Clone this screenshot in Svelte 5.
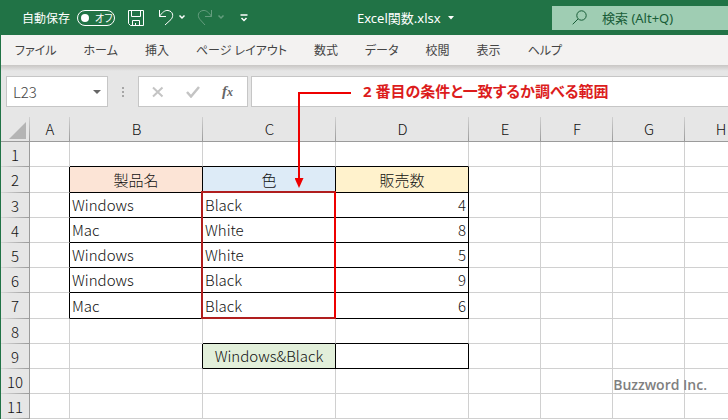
<script lang="ts">
	type Cell = { text: string; kind?: string };

	const menus = ['ファイル', 'ホーム', '挿入', 'ページ レイアウト', '数式', 'データ', '校閲', '表示', 'ヘルプ'];
	const columns = ['A', 'B', 'C', 'D', 'E', 'F', 'G', 'H'];
	const rows = [1, 2, 3, 4, 5, 6, 7, 8, 9, 10, 11];
	const tallRows = [2, 7];

	const cells: Record<string, Cell> = {
		B2: { text: '製品名', kind: 'head peach' },
		C2: { text: '色', kind: 'head blue' },
		D2: { text: '販売数', kind: 'head yellow' },
		B3: { text: 'Windows' },
		C3: { text: 'Black' },
		D3: { text: '4', kind: 'number' },
		B4: { text: 'Mac' },
		C4: { text: 'White' },
		D4: { text: '8', kind: 'number' },
		B5: { text: 'Windows' },
		C5: { text: 'White' },
		D5: { text: '5', kind: 'number' },
		B6: { text: 'Windows' },
		C6: { text: 'Black' },
		D6: { text: '9', kind: 'number' },
		B7: { text: 'Mac' },
		C7: { text: 'Black' },
		D7: { text: '6', kind: 'number' },
		C9: { text: 'Windows&Black', kind: 'head green' },
		D9: { text: '' }
	};

	let autoSave = false;
	let search = '';
	let nameBox = 'L23';
	let formula = '';

	// a cell draws its own right and bottom line, so the neighbours decide the colour too
	function cellClass(col: number, row: number) {
		const here = cells[columns[col] + row];
		const right = cells[columns[col + 1] + row];
		const below = cells[columns[col] + (row + 1)];
		return [
			here?.kind ?? '',
			here || right ? 'line-right' : '',
			here || below ? 'line-bottom' : ''
		].join(' ');
	}
</script>

<div class="app">
	<header class="titlebar">
		<label class="autosave">
			自動保存
			<span class="switch">
				<input type="checkbox" bind:checked={autoSave} />
				<span class="state">{autoSave ? 'オン' : 'オフ'}</span>
			</span>
		</label>
		<div class="quick">
			<button aria-label="上書き保存">
				<svg width="16" height="16" viewBox="0 0 16 16">
					<path d="M.5 .5h15v15H2.5l-2-2zM3.5 .5v6h9v-6M4.5 15.5v-5h7v5M7.5 15v-2" />
				</svg>
			</button>
			<button class="undo" aria-label="元に戻す">
				<svg width="28" height="17" viewBox="0 0 28 17">
					<path d="M1.5 1v6.5H8M1.5 7.5C4 3.5 7 1 10 1.5c5 .8 6 5.5 3 9L7 16" />
					<path class="bold" d="M21.5 6.5l2.5 2.5 2.5-2.5" />
				</svg>
			</button>
			<button class="redo" aria-label="やり直し" disabled>
				<svg width="28" height="17" viewBox="0 0 28 17">
					<path d="M14.5 1v6.5H8M14.5 7.5C12 3.5 9 1 6 1.500c-5 .8-6 5.5-3 9L8 16" />
					<path class="bold" d="M21.5 6.5l2.5 2.5 2.5-2.5" />
				</svg>
			</button>
			<button class="customize" aria-label="クイック アクセス ツール バーのカスタマイズ">
				<svg width="8" height="8" viewBox="0 0 8 8">
					<path class="bold" d="M.5 1h7M1.5 4l2.5 2.5L6.5 4" />
				</svg>
			</button>
		</div>
		<button class="filename">
			Excel関数.xlsx
			<svg width="6" height="4" viewBox="0 0 6 4"><path class="solid" d="M0 0h6L3 3.5z" /></svg>
		</button>
		<label class="search">
			<svg width="15" height="15" viewBox="0 0 15 15">
				<circle cx="9.5" cy="5.5" r="4.7" />
				<path d="M6 9L.7 14.3" />
			</svg>
			<input type="text" placeholder="検索 (Alt+Q)" aria-label="検索" bind:value={search} />
		</label>
	</header>

	<div class="window">
		<nav class="menubar">
			{#each menus as menu}
				<button>{menu}</button>
			{/each}
		</nav>

		<div class="formula-bar">
			<div class="box name-box">
				<input type="text" aria-label="名前ボックス" bind:value={nameBox} />
				<button aria-label="名前の一覧">
					<svg width="8" height="4" viewBox="0 0 8 4"><path d="M0 0h8L4 4z" fill="#666" /></svg>
				</button>
			</div>
			<svg class="grip" width="3" height="10" viewBox="0 0 3 10">
				<path d="M0 0h2v2H0zM0 4h2v2H0zM0 8h2v2H0z" fill="#a6a6a6" />
			</svg>
			<div class="box tools">
				<button aria-label="キャンセル">
					<svg width="12" height="12" viewBox="0 0 12 12">
						<path d="M1 1.5l9.5 9M10.5 1.5L1 10.5" stroke="#c4c4c4" stroke-width="2" />
					</svg>
				</button>
				<button aria-label="入力">
					<svg width="14" height="12" viewBox="0 0 14 12">
						<path d="M1 6l4 4.5L13 1" fill="none" stroke="#c4c4c4" stroke-width="2.5" />
					</svg>
				</button>
				<button class="fx" aria-label="関数の挿入"><i>f<small>x</small></i></button>
			</div>
			<input class="box formula" type="text" aria-label="数式バー" bind:value={formula} />
		</div>

		<div class="sheet">
			<table>
				<colgroup>
					<col class="w-head" />
					<col class="w-a" />
					<col class="w-wide" span="3" />
					<col class="w-base" span="4" />
				</colgroup>
				<thead>
					<tr>
						<th class="corner">
							<svg width="18" height="17" viewBox="0 0 18 17"><path d="M17 0v17H0z" fill="#b4b4b4" /></svg>
						</th>
						{#each columns as column}
							<th scope="col">{column}</th>
						{/each}
					</tr>
				</thead>
				<tbody>
					{#each rows as row}
						<tr class:tall={tallRows.includes(row)}>
							<th scope="row">{row}</th>
							{#each columns as column, i}
								<td class={cellClass(i, row)}>{cells[column + row]?.text ?? ''}</td>
							{/each}
						</tr>
					{/each}
				</tbody>
			</table>
			<div class="range"></div>
		</div>
	</div>

	<svg class="arrow" width="58" height="98" viewBox="0 0 58 98">
		<path d="M56 2H4v86" fill="none" stroke="#ee0000" stroke-width="2" />
		<path d="M-.5 87h9L4 97z" fill="#ee0000" />
	</svg>
	<p class="note">2 番目の条件と一致するか調べる範囲</p>
	<p class="credit">Buzzword Inc.</p>
</div>

<style>
	:global(body) {
		margin: 0;
		background: #fff;
	}
	.app {
		position: relative;
		min-height: 100vh;
		overflow: hidden;
		font-family: 'Noto Sans', 'Noto Sans CJK JP', sans-serif;
		font-size: 13px;
		font-feature-settings: 'palt';
	}
	button,
	input {
		font: inherit;
		font-feature-settings: inherit;
		color: inherit;
		background: none;
		border: 0;
		margin: 0;
		padding: 0;
		box-sizing: border-box;
	}
	input:focus {
		outline: none;
	}
	svg {
		display: block;
		flex: none;
	}

	.titlebar {
		display: flex;
		align-items: center;
		height: 35px;
		padding-left: 22px;
		background: #217346;
		color: #fff;
	}
	.titlebar svg {
		fill: none;
		stroke: currentColor;
	}
	.titlebar .bold {
		stroke-width: 1.5;
	}
	.titlebar .solid {
		fill: currentColor;
		stroke: none;
	}
	.autosave {
		display: flex;
		align-items: center;
		gap: 7px;
		flex: none;
		width: 106px;
		font-family: 'Noto Sans CJK JP', sans-serif;
		font-size: 12px;
		white-space: nowrap;
	}
	.switch {
		display: flex;
		align-items: center;
		gap: 6px;
		box-sizing: border-box;
		width: 38px;
		height: 16px;
		padding-left: 3px;
		border: 1px solid #fff;
		border-radius: 8px;
		font-size: 10px;
	}
	.switch input {
		appearance: none;
		width: 8px;
		height: 8px;
		border-radius: 50%;
		background: #fff;
	}
	.quick {
		display: flex;
		align-items: center;
		flex: none;
		width: 229px;
	}
	.undo {
		margin-left: 14px;
	}
	.redo {
		margin-left: 11px;
		opacity: 0.3;
	}
	.customize {
		margin-left: 15px;
	}
	.filename {
		display: flex;
		align-items: center;
		gap: 7px;
		flex: none;
		width: 195px;
		white-space: nowrap;
	}
	.search {
		display: flex;
		align-items: center;
		gap: 15px;
		flex: 1;
		height: 24px;
		padding-left: 20px;
		background: #9fcdb3;
		color: #185c37;
	}
	.search input {
		flex: 1;
		min-width: 0;
	}
	.search input::placeholder {
		color: #185c37;
		opacity: 1;
	}

	.window {
		border-left: 1px solid #217346;
	}
	.menubar {
		display: flex;
		gap: 1px;
		height: 30px;
		padding-left: 1px;
		background: #f3f2f1;
		color: #444;
		font-size: 12px;
	}
	.menubar button {
		padding: 0 13px;
		white-space: nowrap;
	}
	.formula-bar {
		display: flex;
		align-items: center;
		padding: 11px 0 10px;
		background: linear-gradient(#c8c6c4, #e6e6e6 6px);
	}
	.box {
		box-sizing: border-box;
		height: 31px;
		border: 1px solid #c6c6c6;
		background: #fff;
	}
	.name-box {
		display: flex;
		align-items: center;
		width: 102px;
		margin-left: 5px;
		padding: 0 6px;
		color: #444;
		font-size: 15px;
		font-weight: 300;
		font-family: 'Noto Sans CJK JP', sans-serif;
	}
	.name-box input {
		flex: 1;
		min-width: 0;
	}
	.grip {
		margin: 0 13px 0 14px;
	}
	.tools {
		display: flex;
		align-items: center;
		gap: 22px;
		width: 110px;
		padding-left: 13px;
	}
	.fx {
		color: #666;
		font-family: 'Liberation Serif', serif;
		font-size: 15px;
		font-weight: bold;
		line-height: 16px;
	}
	.fx small {
		font-size: 12px;
	}
	.formula {
		flex: 1;
		min-width: 0;
		margin-left: 3px;
		border-right: 0;
	}

	.sheet {
		position: relative;
		overflow: hidden;
		background: #fff;
		font-family: 'Noto Sans CJK JP', sans-serif;
		font-size: 15px;
		font-weight: 300;
		line-height: 20px;
		color: #111;
	}
	table {
		width: 756px;
		table-layout: fixed;
		border-collapse: separate;
		border-spacing: 0;
	}
	.w-head {
		width: 29px;
	}
	.w-a {
		width: 40px;
	}
	.w-wide {
		width: 133px;
	}
	.w-base {
		width: 72px;
	}
	tr {
		height: 25px;
	}
	.tall {
		height: 26px;
	}
	th,
	td {
		box-sizing: border-box;
		padding: 0;
		white-space: nowrap;
	}
	th {
		background: #e6e6e6;
		font-weight: inherit;
	}
	thead th {
		border-bottom: 1px solid #9b9b9b;
		background: linear-gradient(#d0d0d0, #9b9b9b) right / 1px 100% no-repeat #e6e6e6;
	}
	.corner svg {
		margin: 3px 0 0 8px;
	}
	tbody th {
		border-right: 1px solid #9b9b9b;
		background: linear-gradient(90deg, #d8d8d8, #9b9b9b) bottom / 100% 1px no-repeat #e6e6e6;
	}
	td {
		padding: 0 2px;
		border-right: 1px solid #d0d0d0;
		border-bottom: 1px solid #d0d0d0;
	}
	.line-right {
		border-right-color: #000;
	}
	.line-bottom {
		border-bottom-color: #000;
	}
	.head {
		text-align: center;
	}
	.number {
		text-align: right;
	}
	.peach {
		background: #fce4d6;
	}
	.blue {
		background: #ddebf7;
	}
	.yellow {
		background: #fff2cc;
	}
	.green {
		background: #e2efda;
	}

	/* marks C3:C7 */
	.range {
		position: absolute;
		left: 200px;
		top: 74px;
		box-sizing: border-box;
		width: 135px;
		height: 128px;
		border: 2px solid #b01e1e;
		border-right-color: #ee0000;
	}
	.arrow {
		position: absolute;
		left: 295px;
		top: 91px;
	}
	.note {
		position: absolute;
		left: 363px;
		top: 81px;
		margin: 0;
		color: #dc1c1c;
		font-size: 15px;
		font-weight: bold;
		line-height: 20px;
		white-space: nowrap;
	}
	.credit {
		position: absolute;
		right: 21px;
		bottom: 25px;
		margin: 0;
		color: #808080;
		font-family: 'Open Sans', sans-serif;
		font-size: 14px;
		font-weight: 600;
		line-height: 20px;
	}
</style>
